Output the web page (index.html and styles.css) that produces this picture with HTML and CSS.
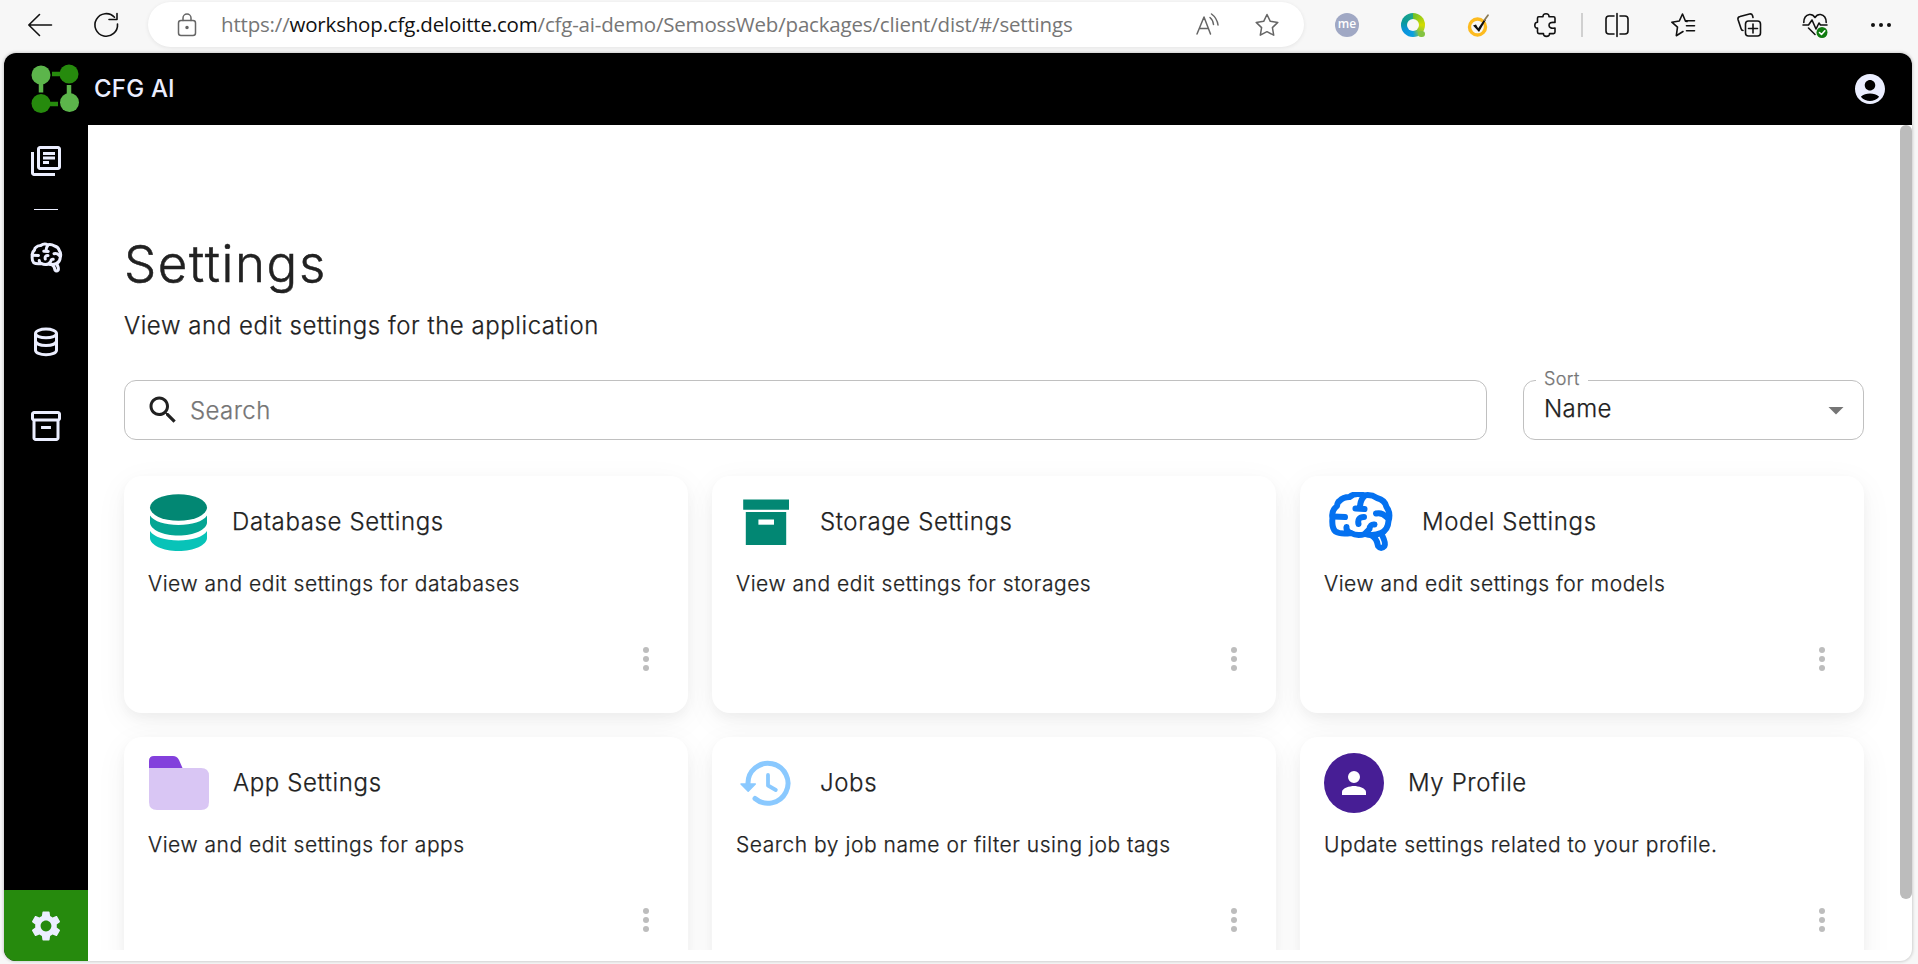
FILE: index.html
```html
<!DOCTYPE html>
<html lang="en">
<head>
<meta charset="utf-8">
<title>Settings</title>
<link rel="stylesheet" href="styles.css">
</head>
<body>
<svg class="defs" aria-hidden="true">
  <symbol id="brain" viewBox="0 0 84 76">
    <g fill="none" stroke="currentColor" stroke-width="6" stroke-linecap="round" stroke-linejoin="round">
      <path d="M19.500 17Q23 13 29.500 13Q36 8 44 11.500Q51 10 57 14Q65 16 66.500 23Q71 29 68.500 37Q68 46 61 49Q53 52.500 45 50Q37 52.500 31 49Q20 50.500 15.500 47.500Q11.500 44 12.500 34Q11 27 17 22Q17.500 18 19.500 17Z"/>
      <path d="M13.500 32.500L25 33M26.500 43Q26 47 30.500 49M43.500 13Q40 17 40 24M35.500 24.500L44.500 25M44 33Q37 33 38.500 40M56 29.500Q62 28 66.500 33M54.500 40.500Q50 40 49.500 45L46 48.500"/>
      <path d="M51 51Q57 54 58 62Q61 66 64.500 62Q66 59 62 51"/>
    </g>
  </symbol>
  <symbol id="more" viewBox="0 0 24 24"><circle cx="12" cy="6" r="2"/><circle cx="12" cy="12" r="2"/><circle cx="12" cy="18" r="2"/></symbol>
</svg>

<header class="toolbar">
  <div class="tool"><svg class="ico" viewBox="0 0 24 24"><path d="M23.500 12H.8M11.500 1.500L.8 12l10.700 10.500"/></svg></div>
  <div class="tool"><svg class="ico" viewBox="0 0 24 24"><path d="M20.500 4.200A11.300 11.300 0 1 0 23.500 11M23 .5V6.500H15"/></svg></div>
  <div class="address">
    <svg class="ico grey lock" viewBox="0 0 24 24"><rect x="3.500" y="7.500" width="17" height="15" rx="2.500"/><path d="M8 7.500V5a4 4 0 0 1 8 0V7.500"/><circle cx="12" cy="14.500" r="1" fill="#666"/></svg>
    <div class="url">https://<span class="host">workshop.cfg.deloitte.com</span>/cfg-ai-demo/SemossWeb/packages/client/dist/#/settings</div>
    <svg class="ico grey read" viewBox="0 0 24 24"><path d="M2 21L9 4l6.500 17M4.500 15.500h9M15 4.500q3 2.500 3.500 7M16.500 1q5.500 4 6.500 11"/></svg>
    <svg class="ico grey star" viewBox="0 0 24 24"><path d="M12 1.500l3.300 6.800 7.500 1.100-5.400 5.200 1.300 7.600L12 18.700l-6.700 3.500 1.300-7.600L1.200 9.400l7.500-1.100z"/></svg>
  </div>
  <div class="tools">
    <div class="tool"><span class="me">me</span></div>
    <div class="tool"><span class="qring"></span></div>
    <div class="tool"><svg class="ico" viewBox="0 0 24 24"><circle cx="10.500" cy="14" r="8" stroke="#fdbb1f" stroke-width="3.400"/><path stroke="none" fill="#111" d="M6 12.500l3-1 2.200 3.700L17.500 6l1.500.8L12 19z"/><path stroke="#8a7a55" stroke-width="1.800" d="M17.500 7L21 2.300"/></svg></div>
    <div class="tool"><svg class="ico" viewBox="0 0 24 24"><path d="M4.500 5q0-1.200 1.200-1.200H10Q9.800.8 13 .8t3 3h4.500q1.500 0 1.500 1.500v4.200q-6-.8-6 2.800t6 2.800v4q0 1.500-1.500 1.500H16.500q.2 2.800-3 2.800T10.500 20.600H6q-1.500 0-1.500-1.500v-4Q1.800 15.200 1.800 12.300t2.700-3z"/></svg></div>
    <div class="divider"></div>
    <div class="tool"><svg class="ico" viewBox="0 0 24 24"><path d="M12 .5v23M9 3H4Q1 3 1 6v12q0 3 3 3h5M15 3h5q3 0 3 3v12q0 3-3 3h-5"/></svg></div>
    <div class="tool"><svg class="ico" viewBox="0 0 24 24"><path d="M16 8.500l-1.500-.3L11.500 1 8.300 8 .8 9.200l5.700 5-1.200 8.500L12 18.500M15 7.800h8.500M15.500 12.800h8M15.500 17.800h8"/></svg></div>
    <div class="tool"><svg class="ico" viewBox="0 0 24 24"><rect x="8.500" y="8" width="15" height="15" rx="3"/><path d="M16 11v9M11.500 15.500h9M16 4.500l-.5-2q-.7-2-3-1.500L3 3.500Q.5 4 1 6.500L4 15.500q.5 2 2 2"/></svg></div>
    <div class="tool"><svg class="ico heart" viewBox="0 0 24 26"><path d="M.8 9.500q0-7 5.700-8 3.500-.3 5.500 3 2-3.300 5.500-3 5.700 1 5.700 8M0 12h5.500l3.500-5 4 9 3-6 1.500 2H24M5.500 15l6.500 6.500"/><circle cx="19" cy="19.500" r="5.500" fill="#107c10" stroke="none"/><path stroke="#fff" d="M16.500 19.500l2 2 3.300-3.700"/></svg></div>
    <div class="tool"><svg class="ico dots" viewBox="0 0 24 24"><circle cx="4" cy="12" r="2"/><circle cx="12" cy="12" r="2"/><circle cx="20" cy="12" r="2"/></svg></div>
  </div>
</header>

<div class="frame">
  <div class="appbar">
    <svg class="logo" viewBox="0 0 50 50">
      <path stroke="#5cb54b" stroke-width="4.500" d="M11 11V28.500M39 21V39"/>
      <path stroke="#268a0d" stroke-width="4.500" d="M22 10H39M11 40H28"/>
      <circle cx="11" cy="11" r="9.500" fill="#5cb54b"/><circle cx="39" cy="10" r="9.500" fill="#268a0d"/>
      <circle cx="11" cy="39.500" r="9.500" fill="#268a0d"/><circle cx="39.500" cy="38.500" r="9.500" fill="#5cb54b"/>
    </svg>
    <div class="brand">CFG AI</div>
    <svg class="mui account" viewBox="0 0 24 24"><path d="M12 2C6.480 2 2 6.480 2 12s4.480 10 10 10 10-4.480 10-10S17.520 2 12 2zm0 4c1.930 0 3.500 1.570 3.500 3.500S13.930 13 12 13s-3.500-1.570-3.500-3.500S10.070 6 12 6zm0 14c-2.030 0-4.430-.820-6.140-2.880C7.550 15.800 9.680 15 12 15s4.450.8 6.140 2.120C16.430 19.180 14.030 20 12 20z"/></svg>
  </div>
  <div class="body">
    <nav class="side">
      <div class="nav first"><svg class="mui" viewBox="0 0 24 24"><path d="M20 2H8c-1.100 0-2 .9-2 2v12c0 1.100.9 2 2 2h12c1.100 0 2-.9 2-2V4c0-1.100-.9-2-2-2zm0 14H8V4h12v12zM4 6H2v14c0 1.100.9 2 2 2h14v-2H4V6zm6 0h8v2h-8zm0 3h8v2h-8zm0 3h4v2h-4z"/></svg></div>
      <div class="rule"></div>
      <div class="nav"><svg class="brain-s"><use href="#brain"/></svg></div>
      <div class="nav"><svg class="mui" viewBox="0 0 24 24"><g fill="none" stroke="currentColor" stroke-width="2"><ellipse cx="12" cy="6.300" rx="7" ry="2.900"/><path d="M5 6.500V17.500C5 19.200 8 20.500 12 20.500s7-1.300 7-3V6.500M5 11.500c.5 1.800 3.500 2.800 7 2.800s6.500-1 7-2.800"/></g></svg></div>
      <div class="nav"><svg class="mui" viewBox="0 0 24 24"><path d="M20 2H4c-1 0-2 .9-2 2v3.010c0 .720.430 1.340 1 1.690V20c0 1.100 1.100 2 2 2h14c.9 0 2-.9 2-2V8.700c.570-.350 1-.970 1-1.690V4c0-1.100-1-2-2-2zm-1 18H5V9h14v11zm1-13H4V4h16v3z"/><path d="M8.700 12h6.600v2H8.700z"/></svg></div>
      <div class="gear"><svg class="mui" viewBox="0 0 24 24"><path d="M19.140 12.940c.040-.3.060-.610.060-.940 0-.320-.020-.640-.070-.940l2.030-1.580c.180-.140.230-.410.120-.610l-1.920-3.320c-.120-.220-.370-.290-.590-.220l-2.390.960c-.5-.380-1.030-.7-1.620-.940l-.360-2.540c-.040-.240-.240-.410-.480-.410h-3.840c-.240 0-.430.170-.470.410l-.360 2.540c-.590.240-1.130.570-1.620.940l-2.390-.960c-.220-.080-.470 0-.590.220L2.740 8.870c-.120.210-.080.470.120.610l2.030 1.580c-.050.3-.090.630-.090.940s.020.640.070.940l-2.030 1.580c-.180.140-.230.410-.120.610l1.920 3.320c.120.220.370.290.590.220l2.390-.960c.5.380 1.030.7 1.620.940l.360 2.540c.050.240.240.410.480.410h3.840c.240 0 .440-.170.470-.410l.360-2.540c.590-.240 1.130-.560 1.620-.940l2.390.960c.220.080.470 0 .590-.220l1.920-3.320c.120-.220.070-.470-.120-.610l-2.010-1.580zM12 15.600c-1.980 0-3.600-1.620-3.600-3.600s1.620-3.600 3.600-3.600 3.600 1.620 3.600 3.600-1.620 3.600-3.600 3.600z"/></svg></div>
    </nav>
    <main class="main">
      <div class="content">
        <h1 class="title">Settings</h1>
        <p class="subtitle">View and edit settings for the application</p>
        <div class="filters">
          <div class="search">
            <svg class="mui" viewBox="0 0 24 24"><path d="M15.500 14h-.790l-.280-.270C15.410 12.590 16 11.110 16 9.500 16 5.910 13.090 3 9.500 3S3 5.910 3 9.500 5.910 16 9.500 16c1.610 0 3.090-.590 4.230-1.570l.270.280v.790l5 4.990L20.490 19l-4.990-5zm-6 0C7.010 14 5 11.990 5 9.500S7.010 5 9.500 5 14 7.010 14 9.500 11.990 14 9.500 14z"/></svg>
            <span class="placeholder">Search</span>
          </div>
          <div class="select">
            <span class="label">Sort</span>
            <span class="value">Name</span>
            <svg class="mui arrow" viewBox="0 0 24 24"><path d="M7 10l5 5 5-5z"/></svg>
          </div>
        </div>
        <div class="cards">
          <section class="card">
            <div class="head">
              <svg class="pic" viewBox="0 0 60 60"><ellipse cx="30.500" cy="15.500" rx="28.500" ry="13.300" fill="#028773"/><path fill="#04a593" d="M2 23.500C6 29.500 17 33 30.500 33S55 29.500 59 23.500V30.500C59 37.500 46 43.500 30.500 43.500S2 37.500 2 30.500Z"/><path fill="#08c3b8" d="M2 39C6 45 17 48.500 30.500 48.500S55 45 59 39V46C59 53 46 59 30.500 59S2 53 2 46Z"/></svg>
              <h2 class="name">Database Settings</h2>
            </div>
            <p class="desc">View and edit settings for databases</p>
            <svg class="more"><use href="#more"/></svg>
          </section>
          <section class="card">
            <div class="head">
              <svg class="pic" viewBox="0 0 60 60"><path fill="#028773" d="M7.200 7.500H53V17.800H7.200zM9.800 20H50.200V53H9.800z"/><path fill="#fff" d="M22.400 27.500H38V32.700H22.400z"/></svg>
              <h2 class="name">Storage Settings</h2>
            </div>
            <p class="desc">View and edit settings for storages</p>
            <svg class="more"><use href="#more"/></svg>
          </section>
          <section class="card">
            <div class="head">
              <svg class="pic brain-l" viewBox="4 8 74 60"><use href="#brain" width="84" height="76"/></svg>
              <h2 class="name">Model Settings</h2>
            </div>
            <p class="desc">View and edit settings for models</p>
            <svg class="more"><use href="#more"/></svg>
          </section>
          <section class="card">
            <div class="head">
              <svg class="pic app" viewBox="0 0 61 60"><path fill="#d9c6f4" d="M1 15H53Q61 15 61 23V49Q61 57 53 57H9Q1 57 1 49Z"/><path fill="#8340dc" d="M1 15V8Q1 3 6 3H25Q29 3 31 7L34.500 15Z"/></svg>
              <h2 class="name">App Settings</h2>
            </div>
            <p class="desc">View and edit settings for apps</p>
            <svg class="more"><use href="#more"/></svg>
          </section>
          <section class="card">
            <div class="head">
              <svg class="pic" viewBox="0 0 60 60"><path fill="none" stroke="#8ac9ff" stroke-width="5" stroke-linecap="round" d="M12 31A20 20 0 1 1 19 45.500"/><path fill="#8ac9ff" stroke="#8ac9ff" stroke-width="1.500" stroke-linejoin="round" d="M5 31H19.300L12.200 38.200Z"/><path fill="none" stroke="#8ac9ff" stroke-width="3.800" stroke-linecap="round" stroke-linejoin="round" d="M32 22V32.500L39.800 37"/></svg>
              <h2 class="name">Jobs</h2>
            </div>
            <p class="desc">Search by job name or filter using job tags</p>
            <svg class="more"><use href="#more"/></svg>
          </section>
          <section class="card">
            <div class="head">
              <svg class="pic" viewBox="0 0 60 60"><circle cx="30" cy="30" r="30" fill="#471e95"/><path fill="#fff" d="M30 30a6 6 0 1 0 0-12 6 6 0 0 0 0 12zM30 33c-4 0-12 2-12 6v3H42v-3c0-4-8-6-12-6z"/></svg>
              <h2 class="name">My Profile</h2>
            </div>
            <p class="desc">Update settings related to your profile.</p>
            <svg class="more"><use href="#more"/></svg>
          </section>
        </div>
      </div>
      <div class="scroll"><div class="thumb"></div></div>
    </main>
  </div>
</div>
</body>
</html>
```
FILE: styles.css
```css
* { box-sizing: border-box; margin: 0; padding: 0; }
body {
  width: 1918px; height: 964px; overflow: hidden;
  background: #f7f7f7; color: #212121;
  font-family: Inter, "Liberation Sans", sans-serif; font-weight: 300;
  display: flex; flex-direction: column;
}
.defs { display: none; }
svg { flex: none; }

.toolbar { height: 53px; flex: none; display: flex; padding: 2px 3px 6px 7px; align-items: center; }
.tool { width: 66px; height: 45px; display: flex; align-items: center; justify-content: center; flex: none; }
.ico { width: 24px; height: 24px; overflow: visible; fill: none; stroke: #111; stroke-width: 1.6; stroke-linecap: round; stroke-linejoin: round; }
.grey { stroke: #666; stroke-width: 1.5; }
.heart { height: 26px; margin-top: 2px; }
.dots { fill: #111; stroke: none; }
.address {
  width: 1156px; height: 45px; margin-left: 9px; border-radius: 23px; background: #fff;
  box-shadow: 0 1px 4px rgba(0,0,0,.08);
  display: flex; align-items: center; padding: 0 25px 0 27px;
}
.url { margin-left: 22px; margin-bottom: 1px; flex: 1; font: 20.5px/28px "Open Sans", sans-serif; letter-spacing: -.18px; color: #767676; white-space: nowrap; }
.host { color: #111; }
.star { margin-left: 36px; }
.tools { display: flex; align-items: center; margin-left: 10px; }
.divider { width: 2px; height: 24px; margin: 0 1px 0 3px; background: #d0d0d0; }
.me { width: 24px; height: 24px; border-radius: 50%; background: #a0a8c4; color: #fff; font: 600 12px/22px "Open Sans", sans-serif; text-align: center; }
.qring { position: relative; width: 24px; height: 24px; border-radius: 50%; background: conic-gradient(#6cc02c, #d4dc00 25%, #8dc63f 38%, #0aa0e0 50%, #0a93dc 65%, #0a9a9a 80%, #1fa68a); }
.qring::before { content: ""; position: absolute; inset: 6px; border-radius: 50%; background: #f7f7f7; }
.qring::after { content: ""; position: absolute; right: 0; bottom: 0; width: 7px; height: 6px; border-radius: 3px; background: #84c341; }

.frame {
  width: 1908px; height: 908px; margin-left: 4px; background: #fff; overflow: hidden;
  border-radius: 12px; box-shadow: 0 0 3px 1px rgba(0,0,0,.16);
  display: flex; flex-direction: column;
}
.mui { width: 36px; height: 36px; fill: currentColor; }
.appbar { height: 72px; flex: none; background: #000; color: #ebeeff; display: flex; align-items: center; padding: 0 24px 0 26px; }
.logo { width: 50px; height: 50px; }
.brand { margin: 0 0 2px 14px; font-size: 24px; font-weight: 500; letter-spacing: .2px; flex: 1; }
.body { flex: 1; display: flex; min-height: 0; }
.side { width: 84px; background: #000; color: #ebeeff; display: flex; flex-direction: column; align-items: center; }
.nav { width: 84px; height: 84px; display: flex; align-items: center; justify-content: center; flex: none; }
.nav.first { height: 72px; }
.rule { width: 24px; height: 1px; margin: 12px 0 6px; background: #ebeeff; }
.brain-s { width: 42px; height: 38px; margin-left: 2px; }
.gear { margin-top: auto; width: 84px; height: 71px; background: #268a0d; display: flex; align-items: center; justify-content: center; }

.main { flex: 1; display: flex; min-width: 0; -webkit-text-stroke: .25px currentColor; }
.content { flex: 1; height: 825px; padding: 105px 36px 0; overflow: hidden; }
.scroll { width: 12px; }
.thumb { height: 774px; border-radius: 6px; background: #bcbcbc; }
.title { font-size: 51px; line-height: 68px; font-weight: 300; letter-spacing: 1.6px; -webkit-text-stroke-width: .5px; }
.subtitle { margin-top: 10px; font-size: 24px; line-height: 36px; letter-spacing: .55px; }
.filters { display: flex; gap: 36px; margin-top: 36px; }
.search { width: 1363px; height: 60px; border: 1px solid #c0c0c0; border-radius: 12px; display: flex; align-items: center; padding-left: 20px; }
.placeholder { margin-left: 9px; font-size: 24px; color: #757575; letter-spacing: .4px; }
.select { position: relative; flex: 1; height: 60px; border: 1px solid #c0c0c0; border-radius: 12px; display: flex; align-items: center; padding: 0 9px 0 20px; }
.label { position: absolute; left: 12px; top: -14px; width: 52px; padding-left: 8px; background: #fff; font-size: 18px; line-height: 24px; letter-spacing: .4px; color: #757575; }
.value { flex: 1; font-size: 24px; line-height: 30px; letter-spacing: .4px; margin-bottom: 3px; }
.arrow { color: #757575; }

.cards { margin-top: 36px; display: grid; grid-template-columns: repeat(3, 564px); grid-auto-rows: 237px; gap: 24px; }
.card { border-radius: 18px; background: #fff; box-shadow: 0 8px 33px rgba(0,0,0,.05), 0 5px 12px rgba(0,0,0,.04); padding: 16px 24px 36px; display: flex; flex-direction: column; }
.head { display: flex; align-items: center; gap: 24px; }
.pic { width: 60px; height: 60px; }
.pic.brain-l { width: 74px; color: #0471f0; }
.pic.app { width: 61px; }
.name { font-size: 24px; line-height: 36px; font-weight: 300; letter-spacing: .62px; }
.desc { margin-top: 16px; font-size: 21px; line-height: 31px; letter-spacing: .53px; }
.more { width: 36px; height: 36px; fill: #bdbdbd; margin-top: auto; align-self: flex-end; }
```
